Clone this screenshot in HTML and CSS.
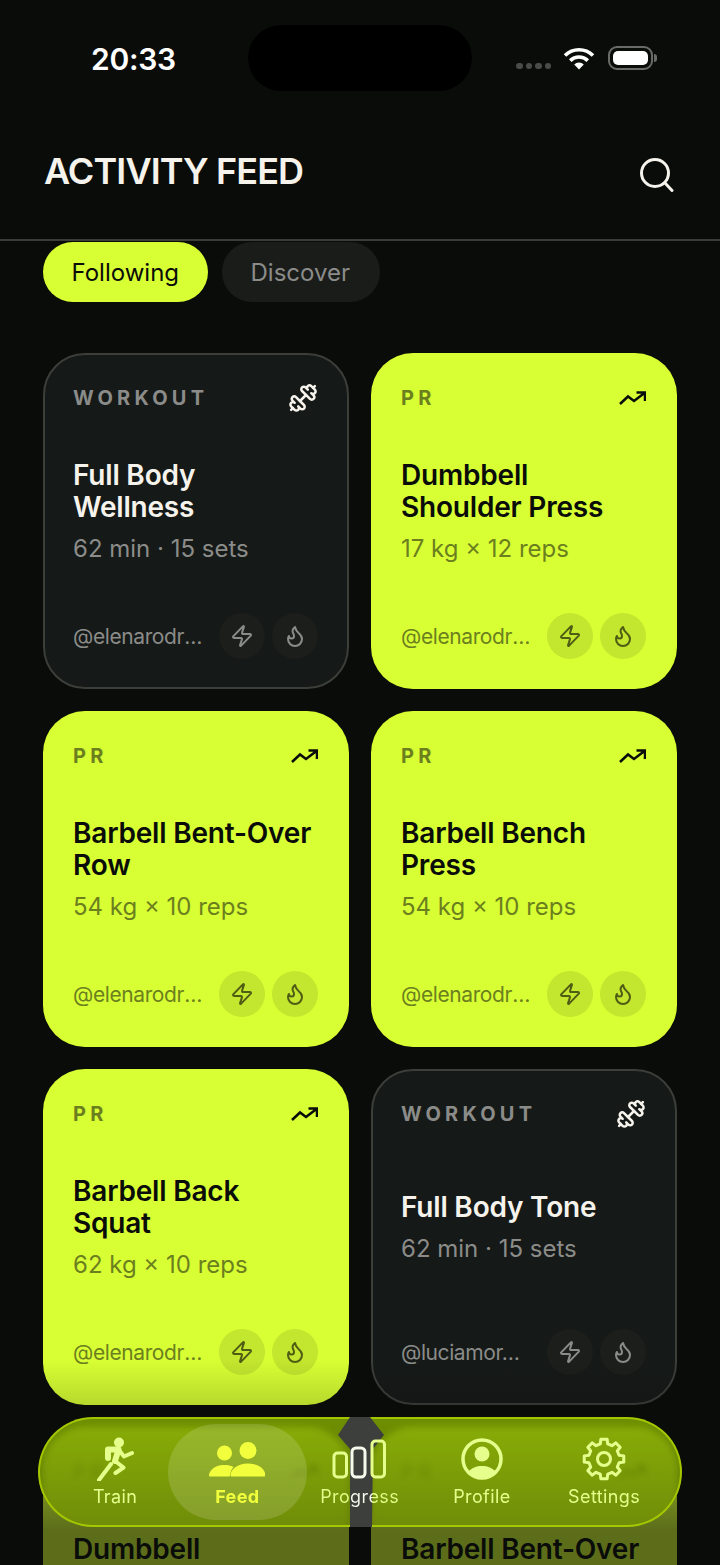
FILE: index.html
```html
<!DOCTYPE html>
<html lang="en">
<head>
    <meta charset="UTF-8">
    <title>Activity Feed</title>
    <link rel="stylesheet" href="styles.css">
</head>
<body>
<div class="pantalla">
    <div class="estado">
        <span class="hora">20:33</span>
        <div class="isla"></div>
        <div class="senal"><i></i><i></i><i></i><i></i></div>
        <svg class="wifi" viewBox="0 0 32 23" fill="none" stroke="#fff" stroke-width="3.6">
            <path d="M2 8.500a20 20 0 0 1 28 0"/>
            <path d="M7.200 13.600a12.600 12.600 0 0 1 17.600 0"/>
            <path d="M16 22.500l-4.800-5a6.800 6.800 0 0 1 9.600 0z" fill="#fff" stroke="none"/>
        </svg>
        <div class="bateria"><div></div></div>
    </div>

    <header class="cabecera">
        <h1>ACTIVITY FEED</h1>
        <svg class="lupa" viewBox="0 0 34 34" fill="none" stroke="#f5f3ec" stroke-width="3" stroke-linecap="round">
            <circle cx="15" cy="15" r="13.500"/>
            <path d="M25 25l7 7.500"/>
        </svg>
    </header>

    <div class="pastillas">
        <button class="pastilla activa">Following</button>
        <button class="pastilla">Discover</button>
    </div>

    <main class="rejilla">
        <article class="tarjeta oscura">
            <div class="arriba">
                <span class="etiqueta">WORKOUT</span>
                <svg class="pesa" viewBox="0 0 24 24"><use href="#i-pesa"/></svg>
            </div>
            <div class="cuerpo">
                <h2>Full Body Wellness</h2>
                <p>62 min · 15 sets</p>
            </div>
            <div class="abajo">
                <span class="usuario">@elenarodriguez</span>
                <span class="accion"><svg viewBox="0 0 24 24"><use href="#i-rayo"/></svg></span>
                <span class="accion"><svg viewBox="0 0 24 24"><use href="#i-llama"/></svg></span>
            </div>
        </article>
        <article class="tarjeta lima">
            <div class="arriba">
                <span class="etiqueta">PR</span>
                <svg class="sube" viewBox="0 0 27 14"><use href="#i-sube"/></svg>
            </div>
            <div class="cuerpo">
                <h2>Dumbbell Shoulder Press</h2>
                <p>17 kg × 12 reps</p>
            </div>
            <div class="abajo">
                <span class="usuario">@elenarodriguez</span>
                <span class="accion"><svg viewBox="0 0 24 24"><use href="#i-rayo"/></svg></span>
                <span class="accion"><svg viewBox="0 0 24 24"><use href="#i-llama"/></svg></span>
            </div>
        </article>
        <article class="tarjeta lima">
            <div class="arriba">
                <span class="etiqueta">PR</span>
                <svg class="sube" viewBox="0 0 27 14"><use href="#i-sube"/></svg>
            </div>
            <div class="cuerpo">
                <h2>Barbell Bent-Over Row</h2>
                <p>54 kg × 10 reps</p>
            </div>
            <div class="abajo">
                <span class="usuario">@elenarodriguez</span>
                <span class="accion"><svg viewBox="0 0 24 24"><use href="#i-rayo"/></svg></span>
                <span class="accion"><svg viewBox="0 0 24 24"><use href="#i-llama"/></svg></span>
            </div>
        </article>
        <article class="tarjeta lima">
            <div class="arriba">
                <span class="etiqueta">PR</span>
                <svg class="sube" viewBox="0 0 27 14"><use href="#i-sube"/></svg>
            </div>
            <div class="cuerpo">
                <h2>Barbell Bench Press</h2>
                <p>54 kg × 10 reps</p>
            </div>
            <div class="abajo">
                <span class="usuario">@elenarodriguez</span>
                <span class="accion"><svg viewBox="0 0 24 24"><use href="#i-rayo"/></svg></span>
                <span class="accion"><svg viewBox="0 0 24 24"><use href="#i-llama"/></svg></span>
            </div>
        </article>
        <article class="tarjeta lima">
            <div class="arriba">
                <span class="etiqueta">PR</span>
                <svg class="sube" viewBox="0 0 27 14"><use href="#i-sube"/></svg>
            </div>
            <div class="cuerpo">
                <h2>Barbell Back Squat</h2>
                <p>62 kg × 10 reps</p>
            </div>
            <div class="abajo">
                <span class="usuario">@elenarodriguez</span>
                <span class="accion"><svg viewBox="0 0 24 24"><use href="#i-rayo"/></svg></span>
                <span class="accion"><svg viewBox="0 0 24 24"><use href="#i-llama"/></svg></span>
            </div>
        </article>
        <article class="tarjeta oscura">
            <div class="arriba">
                <span class="etiqueta">WORKOUT</span>
                <svg class="pesa" viewBox="0 0 24 24"><use href="#i-pesa"/></svg>
            </div>
            <div class="cuerpo">
                <h2>Full Body Tone</h2>
                <p>62 min · 15 sets</p>
            </div>
            <div class="abajo">
                <span class="usuario">@luciamor…</span>
                <span class="accion"><svg viewBox="0 0 24 24"><use href="#i-rayo"/></svg></span>
                <span class="accion"><svg viewBox="0 0 24 24"><use href="#i-llama"/></svg></span>
            </div>
        </article>
        <article class="tarjeta lima">
            <div class="arriba">
                <span class="etiqueta">PR</span>
                <svg class="sube" viewBox="0 0 27 14"><use href="#i-sube"/></svg>
            </div>
            <div class="cuerpo">
                <h2>Dumbbell Shoulder Press</h2>
                <p>17 kg × 12 reps</p>
            </div>
            <div class="abajo"></div>
        </article>
        <article class="tarjeta lima">
            <div class="arriba">
                <span class="etiqueta">PR</span>
                <svg class="sube" viewBox="0 0 27 14"><use href="#i-sube"/></svg>
            </div>
            <div class="cuerpo">
                <h2>Barbell Bent-Over Row</h2>
                <p>54 kg × 10 reps</p>
            </div>
            <div class="abajo"></div>
        </article>
    </main>

    <div class="desvanecido"></div>

    <nav class="menu">
        <a class="opcion">
            <svg viewBox="0 0 44 44" fill="none" stroke="currentColor" stroke-linecap="round" stroke-linejoin="round">
                <circle cx="26" cy="5.500" r="5" fill="currentColor" stroke="none"/>
                <path d="M15 21V12.500h10.500L22 24" stroke-width="6"/>
                <path d="M26 13l5 6.500 8-3.500M22 24l8.500 6.500-8 5.500M18 27L6 43" stroke-width="4"/>
            </svg>
            <span>Train</span>
        </a>
        <a class="opcion activa">
            <svg class="ancho" viewBox="0 -3 56 44" fill="currentColor">
                <circle cx="15.500" cy="13" r="7.500"/>
                <circle cx="39" cy="10.500" r="8.500"/>
                <path d="M0 35.500c0-2 1-4 2.500-5.500 3-3.500 7-5 13-5 3.500 0 6.500.5 9 2-2 2-3 5-3.500 8.500 0 .5-.5 1-1 1H1c-.5 0-1-.5-1-1z"/>
                <path d="M21.500 35.500c0-6 7-12 17.500-12s17.500 6 17.500 12c0 .5-.5 1-1 1H22.500c-.5 0-1-.5-1-1z"/>
            </svg>
            <span>Feed</span>
        </a>
        <a class="opcion progreso">
            <svg class="ancho" viewBox="0 0 56 44" fill="none" stroke="currentColor" stroke-width="3">
                <rect x="2" y="16" width="12.500" height="24" rx="3.500"/>
                <rect class="barra-clara" x="20" y="11" width="13" height="29" rx="4"/>
                <rect x="40" y="4" width="12.500" height="36" rx="3.500"/>
            </svg>
            <span>Progress</span>
        </a>
        <a class="opcion">
            <svg viewBox="0 0 44 44" fill="none">
                <circle cx="22" cy="22" r="19" stroke="currentColor" stroke-width="3.500"/>
                <circle cx="22" cy="17" r="7.500" fill="currentColor"/>
                <path d="M8.500 34.500c3-3.500 8-5.500 13.500-5.500s10.500 2 13.500 5.500c-3.500 3.700-8.300 6-13.500 6s-10-2.300-13.500-6z" fill="currentColor"/>
            </svg>
            <span>Profile</span>
        </a>
        <a class="opcion">
            <svg viewBox="-22 -22 44 44" fill="none" stroke="currentColor" stroke-width="3" stroke-linejoin="round">
                <polygon points="-3.75,-15.04 -3.13,-19.75 3.13,-19.75 3.75,-15.04 7.98,-13.29 11.76,-16.18 16.18,-11.76 13.29,-7.98 15.04,-3.75 19.75,-3.13 19.75,3.13 15.04,3.75 13.29,7.98 16.18,11.76 11.76,16.18 7.98,13.29 3.75,15.04 3.13,19.75 -3.13,19.75 -3.75,15.04 -7.98,13.29 -11.76,16.18 -16.18,11.76 -13.29,7.98 -15.04,3.75 -19.75,3.13 -19.75,-3.13 -15.04,-3.75 -13.29,-7.98 -16.18,-11.76 -11.76,-16.18 -7.98,-13.29"/>
                <circle r="6.500"/>
            </svg>
            <span>Settings</span>
        </a>
    </nav>
</div>

<svg class="iconos" width="0" height="0">
    <symbol id="i-rayo" viewBox="0 0 24 24">
        <path d="M4 14a1 1 0 0 1-.78-1.630l9.900-10.200a.5.5 0 0 1 .86.46l-1.920 6.020A1 1 0 0 0 13 10h7a1 1 0 0 1 .78 1.630l-9.900 10.200a.5.5 0 0 1-.86-.46l1.920-6.020A1 1 0 0 0 11 14z"/>
    </symbol>
    <symbol id="i-llama" viewBox="0 0 24 24">
        <path d="M8.500 14.500A2.500 2.500 0 0 0 11 12c0-1.380-.5-2-1-3-1.072-2.143-.224-4.054 2-6 .5 2.500 2 4.900 4 6.500 2 1.600 3 3.500 3 5.500a7 7 0 1 1-14 0c0-1.153.433-2.294 1-3a2.500 2.500 0 0 0 2.500 2.500z"/>
    </symbol>
    <symbol id="i-sube" viewBox="0 0 27 14">
        <path d="M1 13l8-7.500 6 4.500L25.500 2M17.500 1.500h8.500V10"/>
    </symbol>
    <symbol id="i-pesa" viewBox="0 0 24 24">
        <g transform="translate(24 0) scale(-1 1)">
            <path d="M14.400 14.400 9.600 9.600"/>
            <path d="M18.657 21.485a2 2 0 1 1-2.829-2.828l-1.767 1.768a2 2 0 1 1-2.829-2.829l6.364-6.364a2 2 0 1 1 2.829 2.829l-1.768 1.767a2 2 0 1 1 2.828 2.829z"/>
            <path d="m21.500 21.500-1.400-1.400"/>
            <path d="M3.900 3.900 2.500 2.500"/>
            <path d="M6.404 12.768a2 2 0 1 1-2.829-2.829l1.768-1.767a2 2 0 1 1-2.828-2.829l2.828-2.828a2 2 0 1 1 2.829 2.828l1.767-1.768a2 2 0 1 1 2.829 2.829z"/>
        </g>
    </symbol>
</svg>
</body>
</html>
```

FILE: styles.css
```css
* {
    box-sizing: border-box;
}
body {
    margin: 0;
    background: #0a0c0a;
    font-family: Inter, "Noto Sans", sans-serif;
}
.pantalla {
    position: relative;
    width: 720px;
    height: 1565px;
    overflow: hidden;
    background: #0a0c0a;
}
.iconos {
    position: absolute;
}

/* barra de estado */
.estado {
    display: flex;
    height: 110px;
    padding: 25px 0 0 91px;
}
.hora {
    width: 157px;
    margin-top: 16px;
    font-size: 30px;
    font-weight: 600;
    line-height: 36px;
    letter-spacing: -0.3px;
    color: #fff;
}
.isla {
    width: 224px;
    height: 66px;
    border-radius: 33px;
    background: #000;
}
.senal {
    display: flex;
    gap: 3px;
    margin: 38px 0 0 44px;
}
.senal i {
    width: 6.500px;
    height: 6px;
    border-radius: 3px;
    background: #4a4c4a;
}
.wifi {
    width: 32px;
    height: 23px;
    margin: 22px 0 0 12px;
}
.bateria {
    position: relative;
    width: 45px;
    height: 24px;
    margin: 21px 0 0 13px;
    padding: 3px;
    border: 2px solid #6a6b68;
    border-radius: 9px;
}
.bateria div {
    height: 100%;
    border-radius: 5px;
    background: #fff;
}
.bateria::after {
    content: "";
    position: absolute;
    top: 6px;
    right: -6px;
    width: 3px;
    height: 8px;
    border-radius: 0 3px 3px 0;
    background: #6a6b68;
}

/* cabecera */
.cabecera {
    display: flex;
    justify-content: space-between;
    align-items: center;
    height: 131px;
    padding: 0 46px 0 44px;
    border-bottom: 2px solid #3a3c38;
}
.cabecera h1 {
    margin: 0 0 8px;
    font-size: 36px;
    font-weight: 600;
    line-height: 44px;
    letter-spacing: -0.900px;
    color: #f5f3ec;
}
.lupa {
    width: 34px;
    height: 34px;
}

/* filtros */
.pastillas {
    display: flex;
    gap: 14px;
    padding: 1px 43px 0;
}
.pastilla {
    height: 60px;
    padding: 0 30px 0 29px;
    border: 0;
    border-radius: 30px;
    background: #1a1c1a;
    font-family: inherit;
    font-size: 24px;
    color: #8b8c89;
}
.pastilla.activa {
    padding: 0 28.500px;
    background: #d8ff33;
    color: #0a0c0a;
}

/* tarjetas */
.rejilla {
    display: grid;
    grid-template-columns: 306px 306px;
    grid-auto-rows: 336px;
    gap: 22px;
    margin-top: 51px;
    padding: 0 43px;
}
.tarjeta {
    display: flex;
    flex-direction: column;
    padding: 30px 31px 30px 30px;
    border-radius: 42px;
}
.tarjeta.oscura {
    border: 2px solid #3b3e39;
    padding: 28px 29px 28px 28px;
    background: #151917;
}
.tarjeta.lima {
    background: #d8ff33;
}
.arriba {
    display: flex;
    justify-content: space-between;
    align-items: center;
    height: 30px;
}
.etiqueta {
    font-size: 20px;
    font-weight: 700;
    letter-spacing: 4.200px;
}
.oscura .etiqueta {
    color: #8b8c89;
}
.lima .etiqueta {
    color: #6c7f1f;
}
.sube {
    width: 27px;
    height: 14px;
    fill: none;
    stroke: #0a0c0a;
    stroke-width: 2.500;
}
.pesa {
    width: 30px;
    height: 30px;
    fill: none;
    stroke: #f5f3ec;
    stroke-width: 2;
    stroke-linecap: round;
    stroke-linejoin: round;
}
.cuerpo {
    display: flex;
    flex: 1;
    flex-direction: column;
    justify-content: center;
    padding-bottom: 2px;
}
.cuerpo h2 {
    margin: 0;
    font-size: 28px;
    font-weight: 600;
    line-height: 32px;
    letter-spacing: -0.200px;
}
.oscura h2 {
    color: #f5f3ec;
}
.lima h2 {
    color: #0a0c0a;
}
.cuerpo p {
    margin: 10px 0 0;
    font-size: 24px;
    line-height: 32px;
}
.oscura p {
    color: #8b8c89;
}
.lima p {
    color: #6c7f1f;
}
.abajo {
    display: flex;
    align-items: center;
    gap: 7px;
    height: 46px;
}
.usuario {
    flex: 1;
    min-width: 0;
    margin-right: 7px;
    overflow: hidden;
    font-size: 21px;
    letter-spacing: -0.400px;
    white-space: nowrap;
    text-overflow: ellipsis;
}
.oscura .usuario {
    color: #8b8c89;
}
.lima .usuario {
    color: #6c7f1f;
}
.accion {
    display: flex;
    justify-content: center;
    align-items: center;
    width: 46px;
    height: 46px;
    border-radius: 50%;
}
.oscura .accion {
    background: #1c1e1b;
}
.lima .accion {
    background: rgba(10, 12, 10, 0.1);
}
.accion svg {
    width: 24px;
    height: 24px;
    fill: none;
    stroke-width: 2;
    stroke-linecap: round;
    stroke-linejoin: round;
}
.oscura .accion svg {
    stroke: #8b8c89;
}
.lima .accion svg {
    stroke: #4f5c14;
}

/* degradado sobre las tarjetas y menu flotante */
.desvanecido {
    position: absolute;
    left: 0;
    right: 0;
    bottom: 0;
    height: 205px;
    background: linear-gradient(to bottom, rgba(10, 12, 10, 0), rgba(10, 12, 10, 0.6) 83%);
}
.menu {
    position: absolute;
    left: 38px;
    top: 1417px;
    display: flex;
    width: 644px;
    height: 110px;
    padding: 7px 0 0 14px;
    border: 2px solid rgba(170, 205, 0, 0.9);
    border-radius: 55px;
    background: linear-gradient(to bottom, rgba(130, 168, 0, 0.84), rgba(116, 146, 6, 0.84));
    backdrop-filter: blur(3px);
}
/* hueco entre columnas que se ve a traves del menu */
.menu::before {
    content: "";
    position: absolute;
    left: 298px;
    top: -2px;
    width: 46px;
    height: 110px;
    background: #3d3f3c;
    clip-path: polygon(12px 0, 32px 0, 46px 18px, 35px 32px, 34px 110px, 12px 110px, 12px 32px, 0 18px);
}
.opcion {
    position: relative;
    display: flex;
    flex-direction: column;
    align-items: center;
    width: 122.250px;
    padding-top: 11px;
    color: #e6ff8c;
    font-size: 18px;
    line-height: 22px;
    letter-spacing: 0.400px;
}
.opcion svg {
    width: 44px;
    height: 44px;
    margin-bottom: 5px;
}
.opcion svg.ancho {
    width: 56px;
}
.opcion.activa {
    width: 138.250px;
    height: 96px;
    margin: -2px -8px 0;
    padding-top: 13px;
    border-radius: 48px;
    background: rgba(255, 255, 255, 0.14);
    color: #f2ff3d;
    font-weight: 700;
}
.barra-clara {
    stroke: #f7f9ec;
}
.progreso span {
    background: linear-gradient(to right, #e6ff8c 37%, #f7f9ec 37%, #f7f9ec 66%, #e6ff8c 66%);
    background-clip: text;
    -webkit-background-clip: text;
    color: transparent;
}
```
